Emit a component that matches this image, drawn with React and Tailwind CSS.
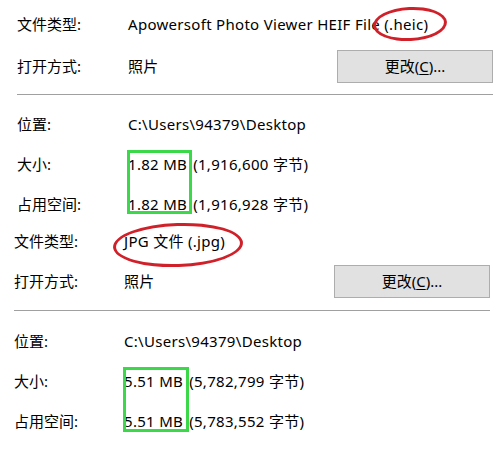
import React from "react"

const font = { fontFamily: '"Segoe UI", "Noto Sans", "Noto Sans CJK SC", sans-serif' }

const Row = ({ label, labelW, h, children, className = "" }) => (
	<div className={`flex items-center ${h} ${className}`}>
		<div className={`${labelW} shrink-0`}>{label}</div>
		<div className="flex-1 flex items-center tracking-[0.3px]">{children}</div>
	</div>
)

const ChangeButton = ({ className = "" }) => (
	<div className={`ml-auto w-[156px] h-[33px] border border-[#adadad] bg-[#e1e1e1] flex items-center justify-center tracking-normal ${className}`}>
		更改(<span className="underline underline-offset-2">C</span>)...
	</div>
)

// First file: the .heic one
const HeicPanel = () => (
	<div className="relative pl-[17px] pr-[7px] pt-[3px]">
		<Row label="文件类型:" labelW="w-[111px]" h="h-[42px]">
			Apowersoft Photo Viewer HEIF File (.heic)
		</Row>
		<Row label="打开方式:" labelW="w-[111px]" h="h-[42px]">
			照片
			<ChangeButton />
		</Row>
		<div className="mt-[7px] h-px bg-[#a0a0a0]" />
		<Row label="位置:" labelW="w-[111px]" h="h-[40px]" className="mt-[9px]">
			C:\Users\94379\Desktop
		</Row>
		<Row label="大小:" labelW="w-[111px]" h="h-[40px]">
			1.82 MB <span className="ml-[6px]">(1,916,600 字节)</span>
		</Row>
		<Row label="占用空间:" labelW="w-[111px]" h="h-[40px]">
			1.82 MB <span className="ml-[6px]">(1,916,928 字节)</span>
		</Row>

		{/* annotations */}
		<div className="absolute left-[373px] top-[7px] w-[74px] h-[34px] rounded-[50%] border-[3px] border-[#d0212a] -rotate-3" />
		<div className="absolute left-[127px] top-[150px] w-[65px] h-[64px] border-[3px] border-[#3bd94a]" />
	</div>
)

// Second file: the .jpg one
const JpgPanel = () => (
	<div className="relative pl-[14px] pr-[10px]">
		<Row label="文件类型:" labelW="w-[110px]" h="h-[35px]">
			JPG 文件 (.jpg)
		</Row>
		<Row label="打开方式:" labelW="w-[110px]" h="h-[44px]">
			照片
			<ChangeButton className="w-[155px] h-[32px]" />
		</Row>
		<div className="mt-[7px] h-px bg-[#a0a0a0]" />
		<Row label="位置:" labelW="w-[110px]" h="h-[40px]" className="mt-[10px]">
			C:\Users\94379\Desktop
		</Row>
		<Row label="大小:" labelW="w-[110px]" h="h-[40px]">
			5.51 MB <span className="ml-[6px]">(5,782,799 字节)</span>
		</Row>
		<Row label="占用空间:" labelW="w-[110px]" h="h-[40px]">
			5.51 MB <span className="ml-[6px]">(5,783,552 字节)</span>
		</Row>

		{/* annotations */}
		<div className="absolute left-[113px] top-[-1px] w-[130px] h-[44px] rounded-[50%] border-[3px] border-[#d0212a] -rotate-2" />
		<div className="absolute left-[123px] top-[143px] w-[66px] h-[65px] border-[3px] border-[#3bd94a]" />
	</div>
)

const App = () => (
	<div className="w-[500px] h-[454px] bg-white text-black text-[15px] overflow-hidden" style={font}>
		<HeicPanel />
		<JpgPanel />
	</div>
)

export default App
